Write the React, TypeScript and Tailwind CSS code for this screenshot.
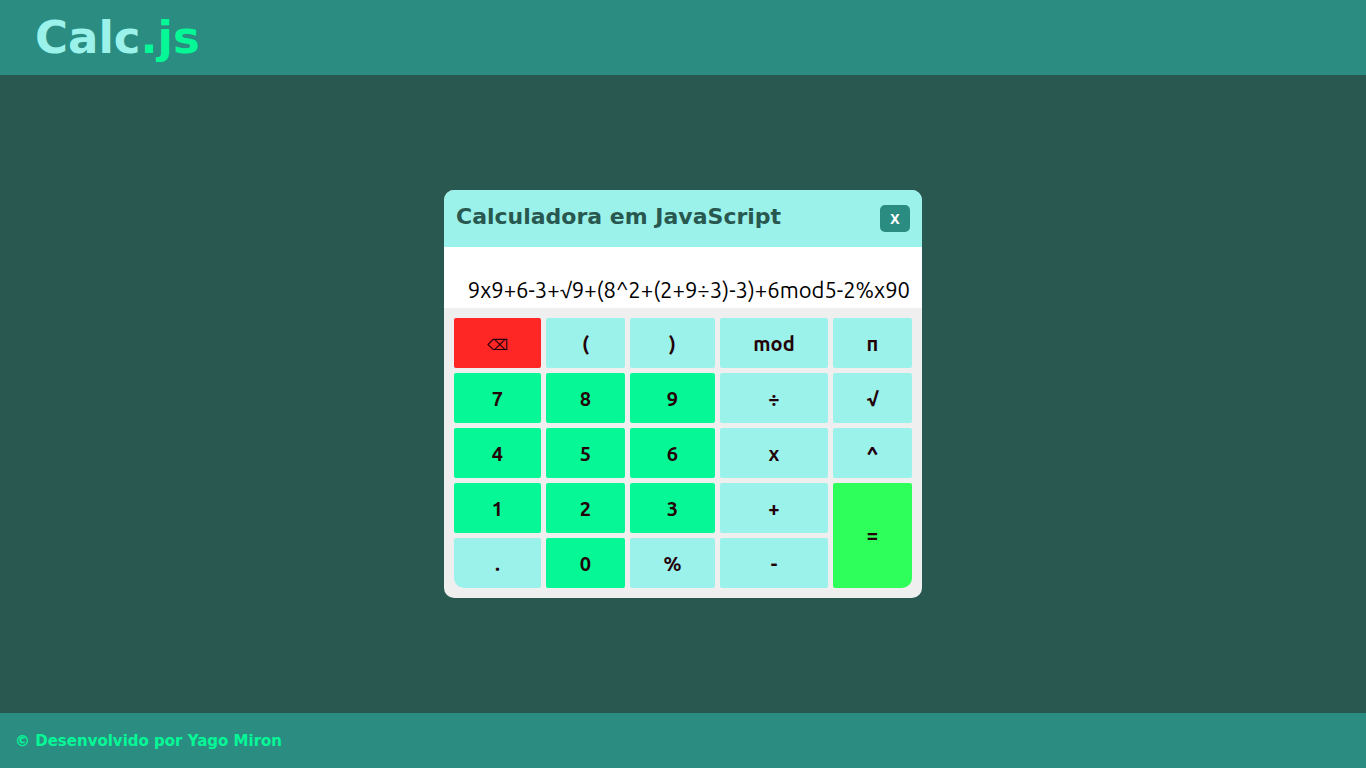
import { useState } from "react";

type Tone = "digit" | "operator" | "erase" | "equals";

interface Key {
  label: string;
  name?: string;
  tone: Tone;
  corner?: string;
}

const tones: Record<Tone, string> = {
  digit: "bg-[#06f896] pt-0.5 text-xl font-semibold",
  operator: "bg-[#9bf2ea] pt-0.5 text-xl font-semibold",
  erase: "bg-[#ff2626] pt-1 text-[15px] font-normal",
  equals: "row-span-2 bg-[#2eff5b] text-xl font-semibold",
};

const op = (label: string, name?: string): Key => ({ label, name, tone: "operator" });
const digit = (label: string): Key => ({ label, tone: "digit" });

const keys: Key[] = [
  { label: "⌫", name: "Apagar", tone: "erase" },
  op("("),
  op(")"),
  op("mod"),
  op("п", "pi"),
  digit("7"),
  digit("8"),
  digit("9"),
  op("÷"),
  op("√"),
  digit("4"),
  digit("5"),
  digit("6"),
  op("x"),
  op("^"),
  digit("1"),
  digit("2"),
  digit("3"),
  op("+"),
  { label: "=", tone: "equals", corner: "rounded-br-[10px]" },
  { label: ".", tone: "operator", corner: "rounded-bl-[10px]" },
  digit("0"),
  op("%"),
  op("-"),
];

function Keypad({ onPress }: { onPress: (key: Key) => void }) {
  return (
    <div className="grid auto-rows-[50px] grid-cols-[87fr_79fr_85fr_108fr_79fr] gap-[5px] p-[10px]">
      {keys.map((key) => (
        <button
          key={key.label}
          type="button"
          aria-label={key.name}
          onClick={() => onPress(key)}
          className={`flex cursor-pointer items-center justify-center rounded-xs text-[#230008] ${
            tones[key.tone]
          } ${key.corner ?? ""}`}
        >
          {key.label}
        </button>
      ))}
    </div>
  );
}

export default function App() {
  const [expression, setExpression] = useState("9x9+6-3+√9+(8^2+(2+9÷3)-3)+6mod5-2%x90");

  const press = (key: Key) => {
    if (key.tone === "erase") setExpression((value) => value.slice(0, -1));
    else if (key.tone !== "equals") setExpression((value) => value + key.label);
  };

  return (
    <div className="flex min-h-screen flex-col bg-[#285850] font-['DejaVu_Sans',sans-serif]">
      <header className="flex h-[75px] items-center bg-[#2b8c82] px-[35px]">
        <h1 className="text-[45px] leading-none font-bold text-[#9bf2ea]">
          Calc<span className="text-[#06f896]">.js</span>
        </h1>
      </header>

      <main className="flex flex-1 items-center justify-center">
        <section className="w-full max-w-[478px] overflow-hidden rounded-[10px] bg-[#efefef] font-['Ubuntu','Noto_Sans','DejaVu_Sans',sans-serif]">
          <div className="flex h-[57px] items-center justify-between bg-[#9bf2ea] px-3">
            <h2 className="pb-1 font-['DejaVu_Sans',sans-serif] text-[22px] leading-7 font-bold text-[#285850]">
              Calculadora em JavaScript
            </h2>
            <button
              type="button"
              aria-label="Limpar"
              onClick={() => setExpression("")}
              className="h-[27px] w-[30px] cursor-pointer rounded-[5px] bg-[#2b8c82] font-['Noto_Sans',sans-serif] text-sm font-bold text-white"
            >
              X
            </button>
          </div>
          <input
            type="text"
            aria-label="Expressão"
            readOnly
            value={expression}
            className="block h-[61px] w-full bg-white px-3 pt-6 text-right text-[22px] font-normal text-black outline-none"
          />
          <Keypad onPress={press} />
        </section>
      </main>

      <footer className="flex h-[55px] items-center bg-[#2b8c82] px-[15px] pt-0.5">
        <p className="text-[15px] font-bold text-[#06f896]">© Desenvolvido por Yago Miron</p>
      </footer>
    </div>
  );
}
